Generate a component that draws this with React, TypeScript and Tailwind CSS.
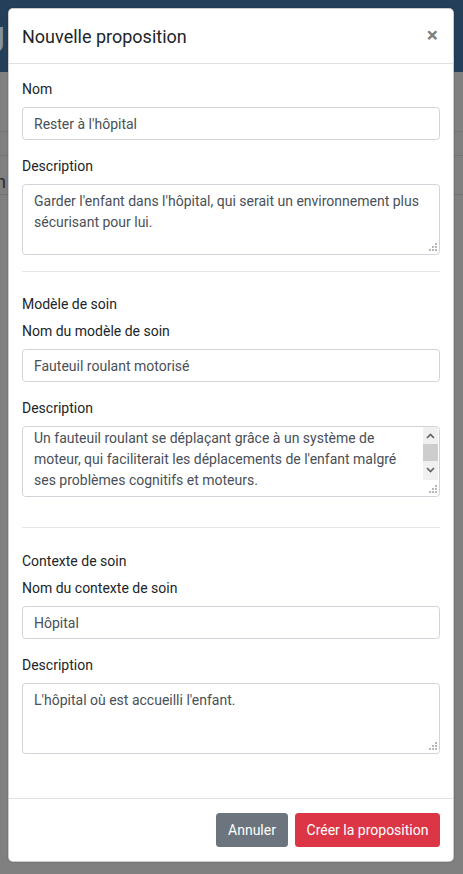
import React from "react";

const FONT = "font-['Segoe_UI',Roboto,'Liberation_Sans',sans-serif]";

function Grip() {
  return (
    <svg className="absolute right-[2px] bottom-[3px]" width="9" height="8" viewBox="0 0 9 8">
      <rect x="7" y="0" width="2" height="2" fill="#b8b8b8" />
      <rect x="4" y="3" width="2" height="2" fill="#b8b8b8" />
      <rect x="7" y="3" width="2" height="2" fill="#b8b8b8" />
      <rect x="1" y="6" width="2" height="2" fill="#b8b8b8" />
      <rect x="4" y="6" width="2" height="2" fill="#b8b8b8" />
      <rect x="7" y="6" width="2" height="2" fill="#b8b8b8" />
    </svg>
  );
}

function Label({ children, mb = "mb-[7px]" }: { children: React.ReactNode; mb?: string }) {
  return <label className={`block pt-[1px] text-[14px] leading-[21px] text-[#212529] ${mb}`}>{children}</label>;
}

function Input({ value }: { value: string }) {
  return (
    <input
      readOnly
      value={value}
      className={`block w-full h-[33px] border border-[#ced4da] rounded-[3.5px] px-[11px] pt-[1px] text-[14px] text-[#495057] bg-white outline-none ${FONT}`}
    />
  );
}

function TextArea({ lines, scrolled = false }: { lines: string[]; scrolled?: boolean }) {
  return (
    <div
      role="textbox"
      className="relative h-[71px] border border-[#ced4da] rounded-[3.5px] bg-white overflow-hidden text-[14px] leading-[21px] text-[#495057]"
    >
      <div className={`px-[11px] ${scrolled ? "pt-[1px]" : "pt-[6px]"}`}>
        {lines.map((l, i) => (
          <div key={i} className="whitespace-nowrap">
            {l}
          </div>
        ))}
      </div>
      {scrolled && (
        <div className="absolute right-[1px] top-0 w-[15px] h-[53px] bg-[#f0f0f0] flex flex-col items-center">
          <svg className="mt-[6px]" width="9" height="6" viewBox="0 0 9 6">
            <path d="M1 5 L4.5 1.5 L8 5" fill="none" stroke="#606060" strokeWidth="1.6" />
          </svg>
          <div className="mt-[5px] w-[15px] h-[17px] bg-[#cdcdcd]" />
          <svg className="mt-[6px]" width="9" height="6" viewBox="0 0 9 6">
            <path d="M1 1 L4.5 4.5 L8 1" fill="none" stroke="#606060" strokeWidth="1.6" />
          </svg>
        </div>
      )}
      <Grip />
    </div>
  );
}

export default function App() {
  return (
    <div className={`relative w-[463px] h-[874px] overflow-hidden bg-[#808080] ${FONT}`}>
      {/* background page (under backdrop) */}
      <div className="h-[72px] bg-[#233f5a] flex items-center overflow-hidden">
        <span className="ml-[-14px] mt-[-6px] text-[34px] leading-none text-[#8393a3]">g</span>
      </div>
      <div className="mt-[59px] border-t border-[#767676]" />
      <div className="mt-[23px] h-[40px] border-t border-b border-[#737373] flex items-center overflow-hidden">
        <span className="ml-[-4px] mt-[12px] text-[18px] text-[#2a2a2a]">n</span>
      </div>

      {/* modal */}
      <div className="absolute top-[8px] left-[8px] w-[446px] bg-white border border-[rgba(0,0,0,0.2)] rounded-[5px] shadow-[0_0_2px_rgba(0,0,0,0.25)] flex flex-col">
        <div className="h-[55px] px-[13px] flex items-center justify-between border-b border-[#dee2e6]">
          <h5 className="text-[18px] leading-[26px] font-normal text-[#212529] mt-[1px]">Nouvelle proposition</h5>
          <span className="mr-[2px] mt-[-1px] text-[21px] font-bold leading-none text-black opacity-50">×</span>
        </div>

        <div className="px-[13px] pt-[14px] pb-[44px]">
          <Label>Nom</Label>
          <div className="mb-[15px]">
            <Input value="Rester à l'hôpital" />
          </div>
          <Label>Description</Label>
          <TextArea
            lines={["Garder l'enfant dans l'hôpital, qui serait un environnement plus", "sécurisant pour lui."]}
          />
          <hr className="mt-[16px] border-t border-[#e6e6e6]" />

          <div className="mt-[21px]">
            <Label mb="mb-[5px]">Modèle de soin</Label>
            <Label>Nom du modèle de soin</Label>
            <div className="mb-[15px]">
              <Input value="Fauteuil roulant motorisé" />
            </div>
            <Label>Description</Label>
            <TextArea
              scrolled
              lines={[
                "Un fauteuil roulant se déplaçant grâce à un système de",
                "moteur, qui faciliterait les déplacements de l'enfant malgré",
                "ses problèmes cognitifs et moteurs.",
              ]}
            />
          </div>
          <hr className="mt-[30px] border-t border-[#e6e6e6]" />

          <div className="mt-[22px]">
            <Label mb="mb-[5px]">Contexte de soin</Label>
            <Label>Nom du contexte de soin</Label>
            <div className="mb-[15px]">
              <Input value="Hôpital" />
            </div>
            <Label>Description</Label>
            <TextArea lines={["L'hôpital où est accueilli l'enfant."]} />
          </div>
        </div>

        <div className="border-t border-[#dee2e6] px-[13px] py-[14px] flex justify-end gap-[7px]">
          <button className="w-[72px] h-[34px] rounded-[3.5px] bg-[#6c757d] text-white text-[14px]">Annuler</button>
          <button className="w-[145px] h-[34px] rounded-[3.5px] bg-[#dc3545] text-white text-[14px]">
            Créer la proposition
          </button>
        </div>
      </div>
    </div>
  );
}
